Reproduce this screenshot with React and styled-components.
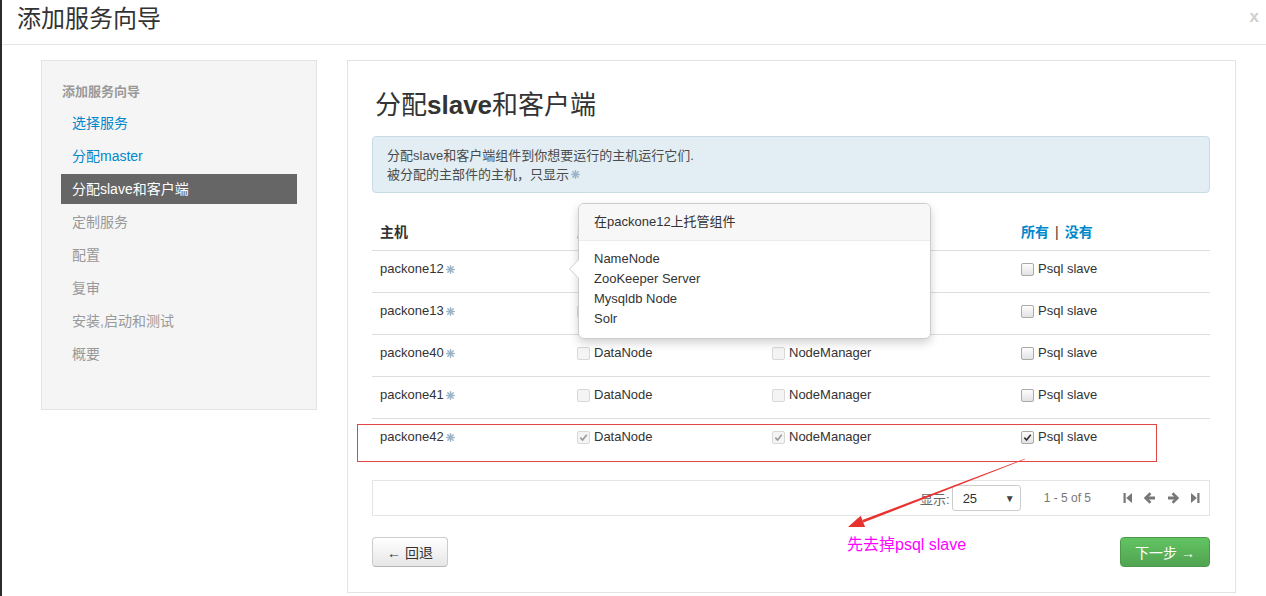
import React from 'react';
import styled, { createGlobalStyle, css } from 'styled-components';

const GlobalStyle = createGlobalStyle`
  html, body {
    margin: 0;
    padding: 0;
    background: #fff;
  }
  body {
    font-family: "Liberation Sans", "Noto Sans CJK SC", sans-serif;
    font-size: 13px;
    color: #333;
  }
`;

const Modal = styled.div`
  height: 596px;
  border-left: 2px solid #2b2b2b;
  box-sizing: border-box;
  overflow: hidden;
`;

const Header = styled.div`
  height: 44px;
  border-bottom: 1px solid #e5e5e5;
  display: flex;
  justify-content: space-between;
  align-items: flex-start;
  padding: 0 7px 0 15px;
`;

const HeaderTitle = styled.h3`
  margin: 0;
  font-size: 24px;
  line-height: 38px;
  font-weight: normal;
  color: #333;
`;

const Close = styled.span`
  font-size: 17px;
  line-height: 34px;
  font-weight: bold;
  color: #cfcfcf;
`;

const Body = styled.div`
  display: flex;
  align-items: flex-start;
  gap: 30px;
  padding: 15px 30px 0 39px;
`;

const Sidebar = styled.div`
  width: 276px;
  height: 350px;
  box-sizing: border-box;
  background: #f5f5f5;
  border: 1px solid #e3e3e3;
  padding: 21px 19px 0;
`;

const NavHeading = styled.div`
  font-size: 13px;
  font-weight: bold;
  line-height: 20px;
  color: #999;
  padding-left: 1px;
  margin-bottom: 6px;
`;

const NavItem = styled.div`
  height: 30px;
  line-height: 30px;
  margin-bottom: 3px;
  padding-left: 11px;
  font-size: 14px;
  color: #999;
  ${(p) => p.done && css`color: #0088cc;`}
  ${(p) => p.active && css`
    background: #666;
    color: #fff;
  `}
`;

const Panel = styled.div`
  position: relative;
  flex: 1;
  height: 533px;
  box-sizing: border-box;
  border: 1px solid #e3e3e3;
  padding: 0 25px 0 24px;
`;

const PageTitle = styled.h2`
  margin: 24px 0 0 3px;
  font-size: 26px;
  line-height: 40px;
  font-weight: normal;
  color: #333;
  b {
    font-weight: bold;
  }
`;

const Alert = styled.div`
  margin-top: 11px;
  background: #e2eef4;
  border: 1px solid #c9dbe4;
  border-radius: 4px;
  padding: 9px 14px 8px;
  font-size: 13px;
  line-height: 19px;
  color: #4b4b4b;
`;

const Star = () => (
  <svg width="9" height="9" viewBox="0 0 10 10" style={{ marginLeft: 2 }}>
    <g stroke="#9ab3c6" strokeWidth="1.6" strokeLinecap="round">
      <line x1="5" y1="0.8" x2="5" y2="9.2" />
      <line x1="0.8" y1="5" x2="9.2" y2="5" />
      <line x1="2" y1="2" x2="8" y2="8" />
      <line x1="8" y1="2" x2="2" y2="8" />
    </g>
  </svg>
);

const TableWrap = styled.div`
  position: relative;
  margin-top: 21px;
`;

const Table = styled.table`
  width: 100%;
  border-collapse: collapse;
  table-layout: fixed;
  font-size: 13px;
`;

const Th = styled.th`
  box-sizing: border-box;
  text-align: left;
  padding: 8px 8px;
  line-height: 20px;
  font-size: 14px;
  font-weight: bold;
  color: #333;
  width: ${(p) => p.w || 'auto'};
`;

const Links = styled.span`
  color: #0088cc;
  i {
    font-style: normal;
    color: #333;
    margin: 0 6px;
    font-weight: normal;
  }
`;

const Td = styled.td`
  border-top: 1px solid #ddd;
  padding: 8px 8px 13px;
  vertical-align: top;
  color: #333;
`;

const Host = styled.div`
  display: flex;
  align-items: center;
  height: 20px;
  line-height: 20px;
`;

const Check = styled.label`
  display: flex;
  align-items: center;
  gap: 4px;
  height: 20px;
  line-height: 20px;
  color: #333;
`;

const Box = styled.span`
  flex: none;
  width: 11px;
  height: 11px;
  border-radius: 2px;
  display: flex;
  align-items: center;
  justify-content: center;
  border: 1px solid ${(p) => (p.disabled ? '#d8d8d8' : '#aaa')};
  background: ${(p) =>
    p.disabled ? '#f4f4f4' : 'linear-gradient(#fdfdfd, #e2e2e2)'};
`;

const CheckBox = ({ checked, disabled, children }) => (
  <Check>
    <Box disabled={disabled}>
      {checked && (
        <svg width="9" height="9" viewBox="0 0 10 10">
          <path
            d="M1.5 5.2 L4 7.8 L8.6 2"
            fill="none"
            stroke={disabled ? '#999' : '#333'}
            strokeWidth="1.8"
          />
        </svg>
      )}
    </Box>
    {children}
  </Check>
);

const Popover = styled.div`
  position: absolute;
  top: -11px;
  left: 206px;
  width: 353px;
  background: #fff;
  border: 1px solid #ccc;
  border-radius: 6px;
  box-shadow: 0 4px 10px rgba(0, 0, 0, 0.18);
  box-sizing: border-box;
  &::before {
    content: '';
    position: absolute;
    left: -10px;
    top: 55px;
    border: 10px solid transparent;
    border-left: 0;
    border-right-color: #ccc;
  }
  &::after {
    content: '';
    position: absolute;
    left: -9px;
    top: 56px;
    border: 9px solid transparent;
    border-left: 0;
    border-right-color: #fff;
  }
`;

const PopTitle = styled.div`
  background: #f7f7f7;
  border-bottom: 1px solid #ebebeb;
  border-radius: 5px 5px 0 0;
  padding: 8px 15px;
  line-height: 20px;
  font-size: 13px;
  color: #333;
`;

const PopBody = styled.div`
  padding: 8px 15px 9px;
  line-height: 20px;
  font-size: 13px;
  color: #333;
`;

const Pager = styled.div`
  margin-top: 20px;
  height: 36px;
  box-sizing: border-box;
  border: 1px solid #e4e4e4;
  display: flex;
  align-items: center;
  justify-content: flex-end;
  padding-right: 9px;
  font-size: 13px;
  color: #666;
`;

const Select = styled.div`
  width: 69px;
  height: 26px;
  box-sizing: border-box;
  border: 1px solid #ccc;
  border-radius: 3px;
  margin-left: 2px;
  display: flex;
  align-items: center;
  justify-content: space-between;
  padding: 0 5px 0 10px;
  color: #333;
  span {
    font-size: 10px;
    color: #444;
  }
`;

const Count = styled.span`
  font-size: 12px;
  color: #777;
  margin: 0 32px 0 23px;
`;

const PageIcons = styled.div`
  display: flex;
  gap: 11px;
  align-items: center;
`;

const Actions = styled.div`
  margin-top: 21px;
  display: flex;
  justify-content: space-between;
`;

const Button = styled.button`
  height: 30px;
  box-sizing: border-box;
  padding: 0 14px;
  font-family: inherit;
  font-size: 14px;
  border-radius: 4px;
  border: 1px solid #ccc;
  border-bottom-color: #b5b5b5;
  color: #333;
  background: linear-gradient(#fff, #e6e6e6);
  ${(p) => p.primary && css`
    width: 90px;
    color: #fff;
    border-color: #4a9a4a;
    background: linear-gradient(#62c462, #51a351);
  `}
`;

const Outline = styled.div`
  position: absolute;
  left: 9px;
  top: 363px;
  width: 800px;
  height: 38px;
  border: 1px solid #e24545;
  box-sizing: border-box;
`;

const ArrowSvg = styled.svg`
  position: absolute;
  left: 492px;
  top: 389px;
`;

const Note = styled.div`
  position: absolute;
  left: 499px;
  top: 474px;
  font-size: 16px;
  line-height: 20px;
  color: #f0f;
`;

const First = () => (
  <svg width="10" height="12" viewBox="0 0 10 12">
    <rect x="0.5" y="1" width="2.2" height="10" fill="#777" />
    <path d="M9 1 L3.2 6 L9 11 Z" fill="#777" />
  </svg>
);
const Last = () => (
  <svg width="10" height="12" viewBox="0 0 10 12">
    <rect x="7.3" y="1" width="2.2" height="10" fill="#777" />
    <path d="M1 1 L6.8 6 L1 11 Z" fill="#777" />
  </svg>
);
const Prev = () => (
  <svg width="12" height="12" viewBox="0 0 12 12">
    <path d="M11 6 H3" stroke="#777" strokeWidth="3" />
    <path d="M6.5 1.2 L1.5 6 L6.5 10.8" fill="none" stroke="#777" strokeWidth="2.6" />
  </svg>
);
const Next = () => (
  <svg width="12" height="12" viewBox="0 0 12 12">
    <path d="M1 6 H9" stroke="#777" strokeWidth="3" />
    <path d="M5.5 1.2 L10.5 6 L5.5 10.8" fill="none" stroke="#777" strokeWidth="2.6" />
  </svg>
);

const rows = [
  { host: 'packone12', dn: null, nm: null, ps: false },
  { host: 'packone13', dn: false, nm: false, ps: false },
  { host: 'packone40', dn: false, nm: false, ps: false },
  { host: 'packone41', dn: false, nm: false, ps: false },
  { host: 'packone42', dn: true, nm: true, ps: true },
];

const steps = ['选择服务', '分配master', '分配slave和客户端', '定制服务', '配置', '复审', '安装,启动和测试', '概要'];

export default function App() {
  return (
    <>
      <GlobalStyle />
      <Modal>
        <Header>
          <HeaderTitle>添加服务向导</HeaderTitle>
          <Close>x</Close>
        </Header>
        <Body>
          <Sidebar>
            <NavHeading>添加服务向导</NavHeading>
            {steps.map((s, i) => (
              <NavItem key={s} done={i < 2} active={i === 2}>
                {s}
              </NavItem>
            ))}
          </Sidebar>
          <Panel>
            <PageTitle>
              分配<b>slave</b>和客户端
            </PageTitle>
            <Alert>
              分配slave和客户端组件到你想要运行的主机运行它们.
              <br />
              被分配的主部件的主机，只显示<Star />
            </Alert>
            <TableWrap>
              <Table>
                <thead>
                  <tr>
                    <Th w="197px">主机</Th>
                    <Th w="195px">
                      <Links>所有<i>|</i>没有</Links>
                    </Th>
                    <Th w="249px">
                      <Links>所有<i>|</i>没有</Links>
                    </Th>
                    <Th>
                      <Links>所有<i>|</i>没有</Links>
                    </Th>
                  </tr>
                </thead>
                <tbody>
                  {rows.map((r) => (
                    <tr key={r.host}>
                      <Td>
                        <Host>
                          {r.host}
                          <Star />
                        </Host>
                      </Td>
                      <Td>
                        {r.dn !== null && (
                          <CheckBox disabled checked={r.dn}>DataNode</CheckBox>
                        )}
                      </Td>
                      <Td>
                        {r.nm !== null && (
                          <CheckBox disabled checked={r.nm}>NodeManager</CheckBox>
                        )}
                      </Td>
                      <Td>
                        <CheckBox checked={r.ps}>Psql slave</CheckBox>
                      </Td>
                    </tr>
                  ))}
                </tbody>
              </Table>
              <Popover>
                <PopTitle>在packone12上托管组件</PopTitle>
                <PopBody>
                  NameNode
                  <br />
                  ZooKeeper Server
                  <br />
                  Mysqldb Node
                  <br />
                  Solr
                </PopBody>
              </Popover>
            </TableWrap>
            <Pager>
              显示:
              <Select>
                25<span>▼</span>
              </Select>
              <Count>1 - 5 of 5</Count>
              <PageIcons>
                <First />
                <Prev />
                <Next />
                <Last />
              </PageIcons>
            </Pager>
            <Actions>
              <Button>← 回退</Button>
              <Button primary>下一步 →</Button>
            </Actions>
            <Outline />
            <ArrowSvg width="195" height="85" viewBox="0 0 195 85">
              <polygon
                points="185.1,9.3 184.9,8.7 22.4,70.0 23.4,72.6"
                fill="#e8322f"
              />
              <polygon points="8,77 25.1,76.9 20.7,65.7" fill="#e8322f" />
            </ArrowSvg>
            <Note>先去掉psql slave</Note>
          </Panel>
        </Body>
      </Modal>
    </>
  );
}
